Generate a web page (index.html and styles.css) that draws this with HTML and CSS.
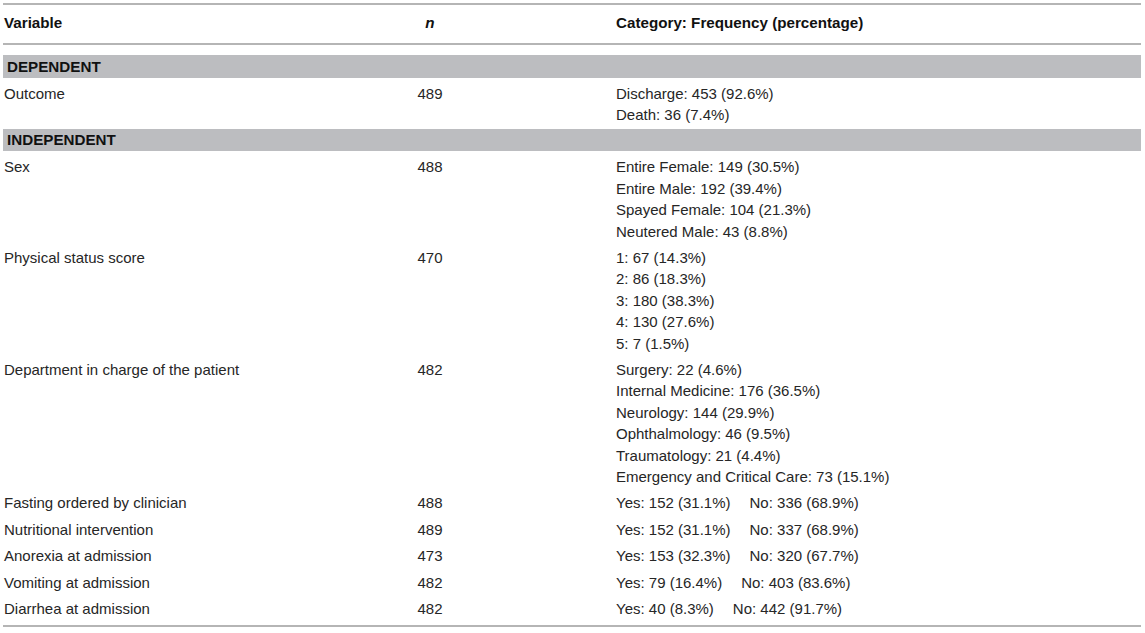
FILE: index.html
```html
<!DOCTYPE html>
<html lang="en">
<head>
  <meta charset="UTF-8">
  <meta name="viewport" content="width=device-width, initial-scale=1.0">
  <title>Table 1 - Descriptive statistics</title>
  <link rel="stylesheet" href="styles.css">
</head>
<body>
  <table class="stats">
    <colgroup>
      <col class="col-var">
      <col class="col-n">
      <col class="col-cat">
    </colgroup>
    <thead>
      <tr>
        <th class="var">Variable</th>
        <th class="n"><em>n</em></th>
        <th class="cat">Category: Frequency (percentage)</th>
      </tr>
    </thead>
    <tbody>
      <tr class="band first">
        <td colspan="3">DEPENDENT</td>
      </tr>
      <tr>
        <td class="var">Outcome</td>
        <td class="n">489</td>
        <td class="cat">Discharge: 453 (92.6%)<br>Death: 36 (7.4%)</td>
      </tr>
      <tr class="band">
        <td colspan="3">INDEPENDENT</td>
      </tr>
      <tr>
        <td class="var">Sex</td>
        <td class="n">488</td>
        <td class="cat">Entire Female: 149 (30.5%)<br>Entire Male: 192 (39.4%)<br>Spayed Female: 104 (21.3%)<br>Neutered Male: 43 (8.8%)</td>
      </tr>
      <tr>
        <td class="var">Physical status score</td>
        <td class="n">470</td>
        <td class="cat">1: 67 (14.3%)<br>2: 86 (18.3%)<br>3: 180 (38.3%)<br>4: 130 (27.6%)<br>5: 7 (1.5%)</td>
      </tr>
      <tr>
        <td class="var">Department in charge of the patient</td>
        <td class="n">482</td>
        <td class="cat">Surgery: 22 (4.6%)<br>Internal Medicine: 176 (36.5%)<br>Neurology: 144 (29.9%)<br>Ophthalmology: 46 (9.5%)<br>Traumatology: 21 (4.4%)<br>Emergency and Critical Care: 73 (15.1%)</td>
      </tr>
      <tr>
        <td class="var">Fasting ordered by clinician</td>
        <td class="n">488</td>
        <td class="cat">Yes: 152 (31.1%)<span class="no">No: 336 (68.9%)</span></td>
      </tr>
      <tr>
        <td class="var">Nutritional intervention</td>
        <td class="n">489</td>
        <td class="cat">Yes: 152 (31.1%)<span class="no">No: 337 (68.9%)</span></td>
      </tr>
      <tr>
        <td class="var">Anorexia at admission</td>
        <td class="n">473</td>
        <td class="cat">Yes: 153 (32.3%)<span class="no">No: 320 (67.7%)</span></td>
      </tr>
      <tr>
        <td class="var">Vomiting at admission</td>
        <td class="n">482</td>
        <td class="cat">Yes: 79 (16.4%)<span class="no">No: 403 (83.6%)</span></td>
      </tr>
      <tr>
        <td class="var">Diarrhea at admission</td>
        <td class="n">482</td>
        <td class="cat">Yes: 40 (8.3%)<span class="no">No: 442 (91.7%)</span></td>
      </tr>
    </tbody>
  </table>
</body>
</html>
```

FILE: styles.css
```css
:root {
  font-family: "Liberation Sans", Arial, sans-serif;
  color: #262626;
}
body {
  margin: 0;
  background: #fff;
}
.stats {
  margin: 3px 0 0 3px;
  width: 1138px;
  table-layout: fixed;
  border-collapse: separate;
  border-spacing: 0;
  border-bottom: 2px solid #b5b5b5;
  font-size: 15px;
  line-height: 21.4px;
}
.col-var {
  width: 247px;
}
.col-n {
  width: 360px;
}
.col-cat {
  width: 531px;
}
th {
  font-weight: bold;
  font-size: 15.2px;
  color: #111;
  text-align: left;
  padding: 7.3px 0 9.3px;
  border-top: 2px solid #b5b5b5;
  border-bottom: 2px solid #b5b5b5;
}
th em {
  font-style: italic;
}
td {
  vertical-align: top;
  padding: 1.5px 0 3.5px;
}
.var {
  padding-left: 1px;
}
.n {
  text-align: center;
}
.cat {
  padding-left: 6px;
}
.band td {
  background: #bcbdc0;
  color: #111;
  font-weight: bold;
  font-size: 15.2px;
  line-height: 21.5px;
  padding: 0.5px 4px;
}
.band.first td {
  border-top: 10px solid #fff;
}
.band + tr td {
  padding-top: 5px;
}
tbody tr:last-child td {
  padding-bottom: 5.5px;
}
.no {
  margin-left: 19px;
}
```
